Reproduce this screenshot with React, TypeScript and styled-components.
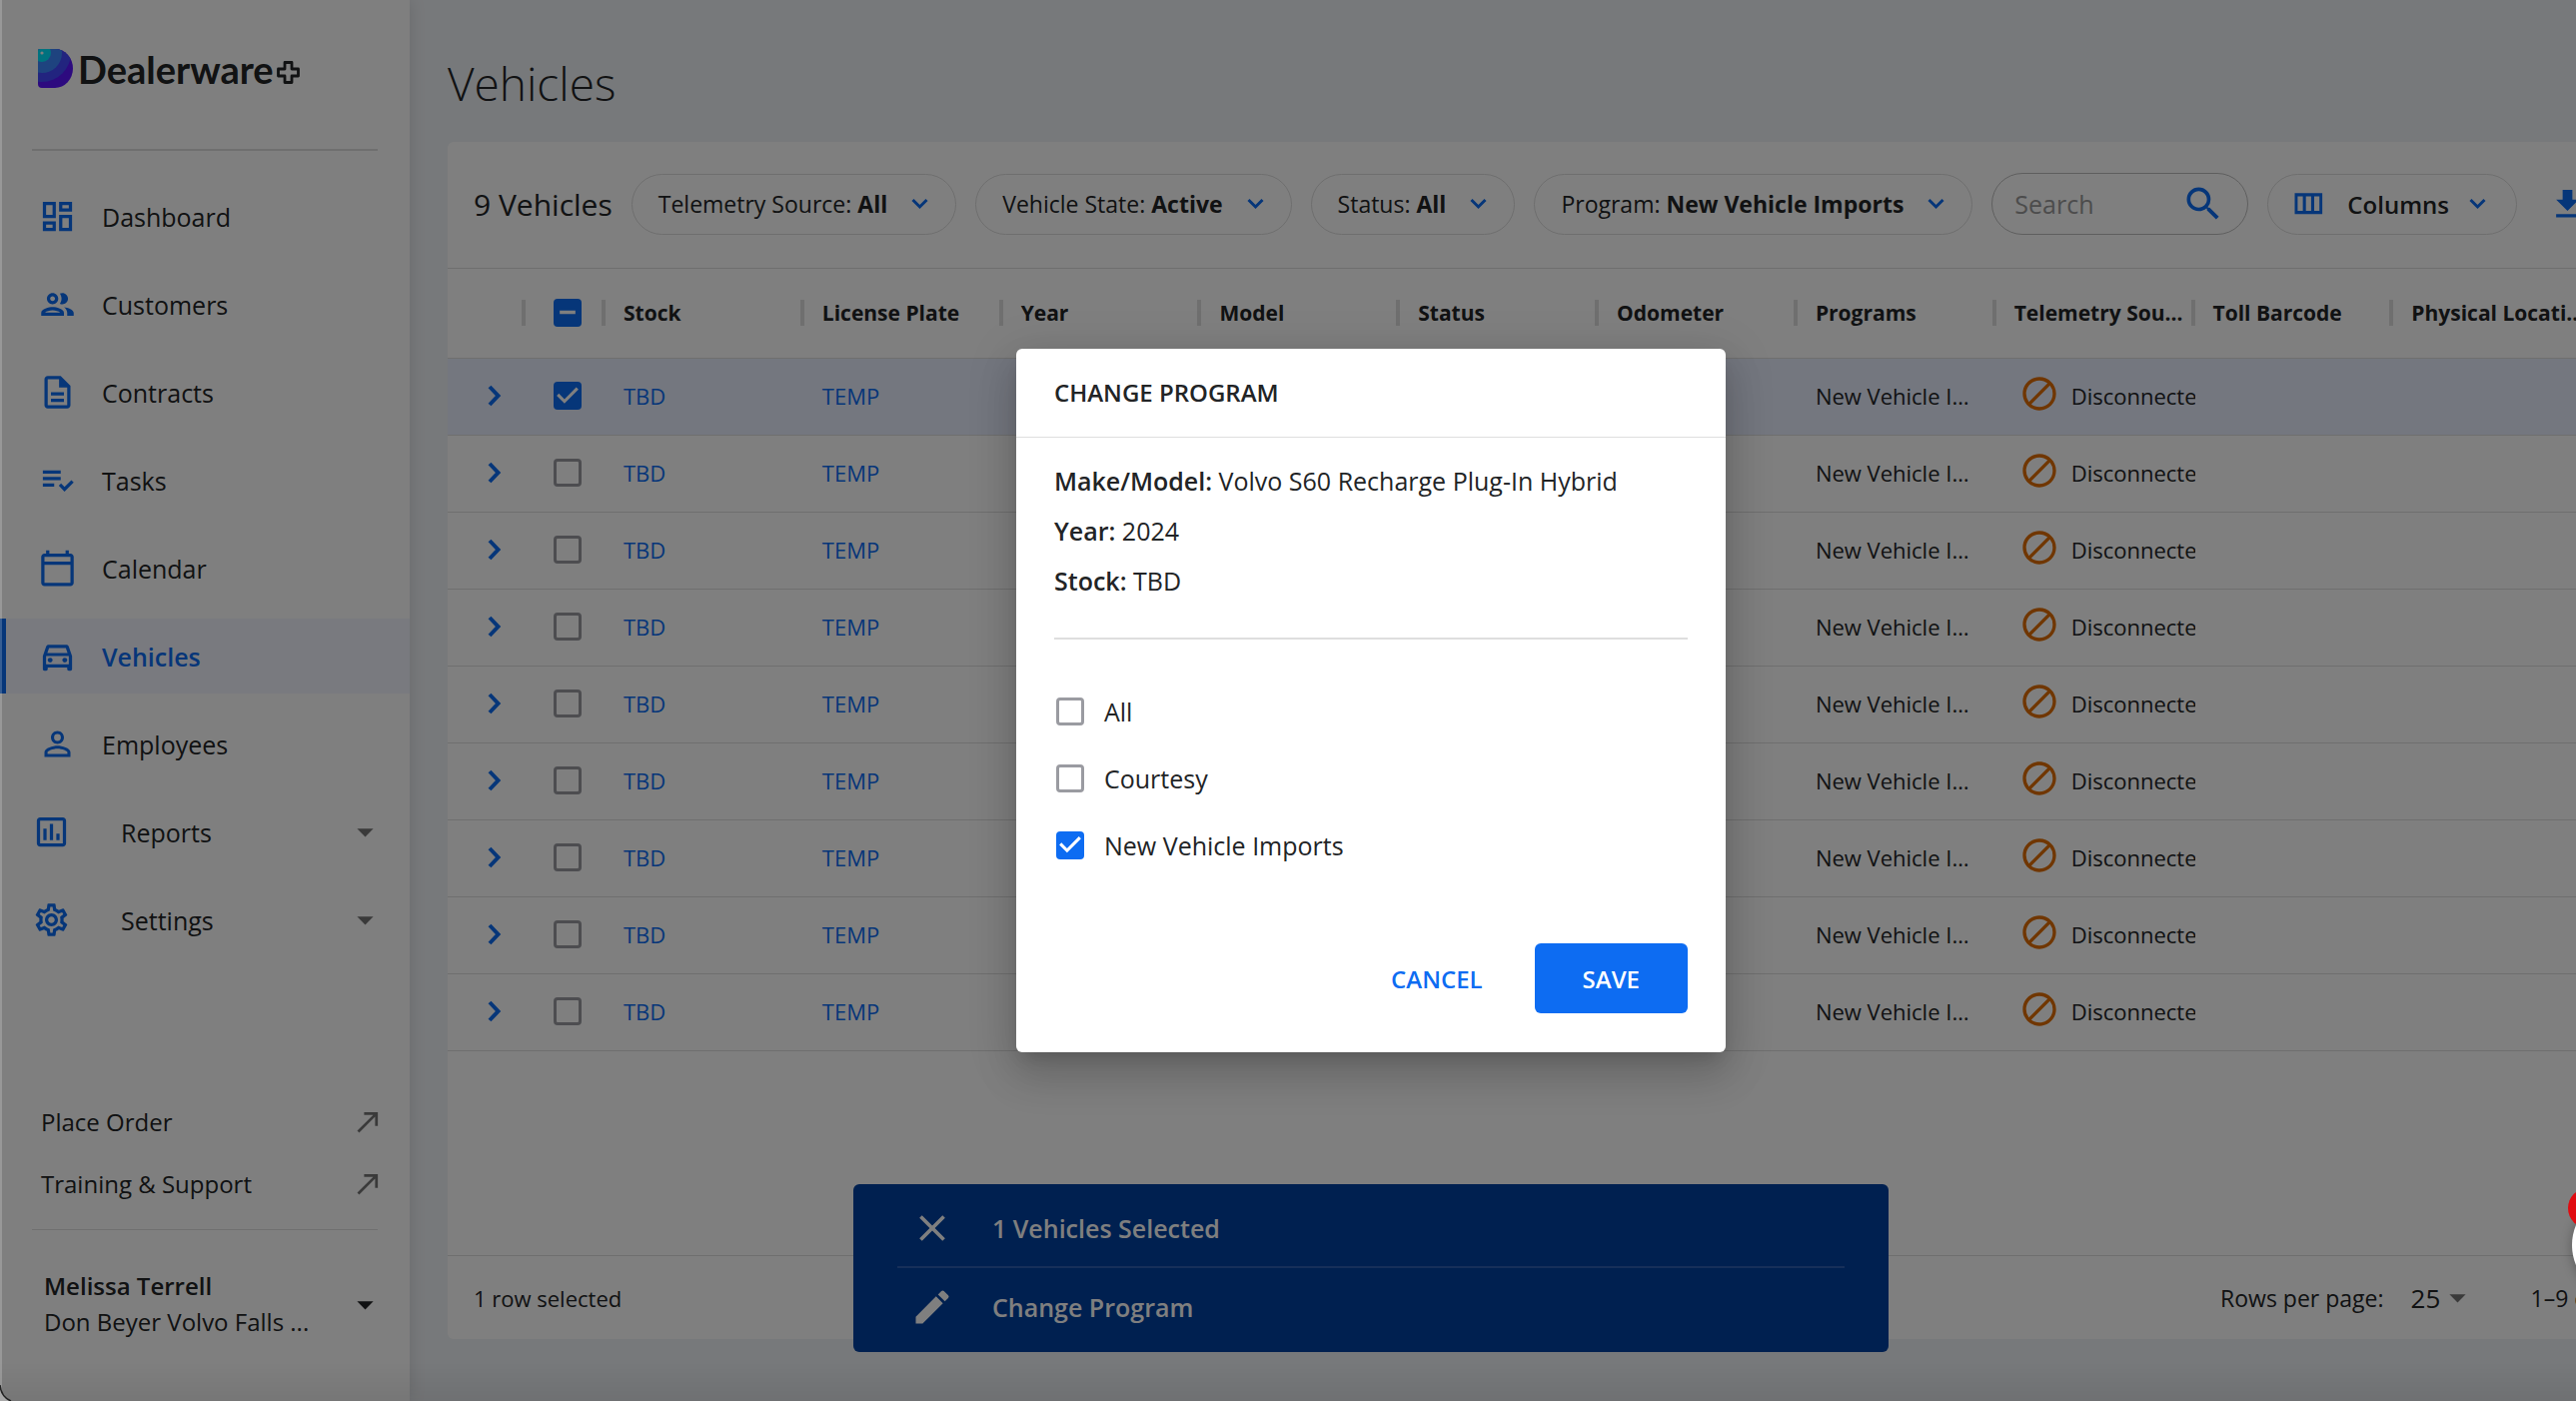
import React from "react";
import styled, { createGlobalStyle, css } from "styled-components";
import {
  MdArrowDropDown,
  MdBlock,
  MdCallMade,
  MdClose,
  MdEdit,
  MdGetApp,
  MdKeyboardArrowLeft,
  MdKeyboardArrowRight,
  MdOutlineAssessment,
  MdOutlineDashboard,
  MdOutlineDescription,
  MdOutlineDirectionsCar,
  MdOutlineSettings,
  MdPersonOutline,
  MdPlaylistAddCheck,
  MdSearch,
} from "react-icons/md";

const color = {
  blue: "#0d6cf2",
  navy: "#0040a0",
  ink: "#222426",
  muted: "#757575",
  line: "#dedede",
  page: "#eff2f6",
  selected: "#e8eeff",
  orange: "#e06c00",
};

const GlobalStyle = createGlobalStyle`
  *, *::before, *::after { box-sizing: border-box; }
  html, body, #root { height: 100%; }
  body {
    margin: 0;
    overflow: hidden;
    background: ${color.page};
    color: ${color.ink};
    font-family: "Open Sans", "Noto Sans", sans-serif;
    font-size: 25px;
  }
  button, input, select { font: inherit; color: inherit; }
  button { cursor: pointer; }
  a { color: inherit; text-decoration: none; }
  svg { flex: none; display: block; }
`;

const Shell = styled.div`
  position: relative;
  display: flex;
  width: calc(100% + 166px);
  height: 100%;
`;

/* ---------- sidebar ---------- */

const Sidebar = styled.aside`
  position: relative;
  display: flex;
  flex-direction: column;
  flex: none;
  width: 410px;
  padding-bottom: 61px;
  background: #fff;
  box-shadow: 0 0 16px rgba(0, 0, 0, 0.12);
`;

const Brand = styled.a`
  display: flex;
  align-items: center;
  height: 149px;
  padding: 0 38px 12px;
  svg:last-child { margin-top: 8px; }
`;

const BrandName = styled.span`
  margin: 0 3px 0 5px;
  font-family: Lato, sans-serif;
  font-size: 38px;
  font-weight: 700;
  line-height: 40px;
`;

const Divider = styled.hr<{ $thick?: boolean }>`
  width: auto;
  height: ${(p) => (p.$thick ? 2 : 1)}px;
  margin: 0 32px;
  border: 0;
  background: ${color.line};
`;

const NavList = styled.ul`
  display: flex;
  flex-direction: column;
  gap: 13px;
  flex: 1;
  margin: 28px 0 0;
  padding: 0;
  list-style: none;
`;

const navRow = css`
  display: flex;
  align-items: center;
  width: 100%;
  height: 75px;
  border: 0;
  border-left: 6px solid transparent;
  background: none;
  text-align: left;
`;

const NavLink = styled.a<{ $active?: boolean }>`
  ${navRow}
  gap: 25px;
  padding: 0 25px 0 32px;
  ${(p) =>
    p.$active &&
    css`
      border-color: ${color.blue};
      background: #f2f5ff;
      color: ${color.blue};
      font-weight: 600;
    `}
  svg { color: ${color.blue}; }
`;

const NavGroup = styled.button`
  ${navRow}
  gap: 50px;
  padding: 0 25px 0 26px;
  svg:first-child { color: ${color.blue}; }
  svg:last-child { margin-left: auto; color: ${color.muted}; }
`;

const HelpLink = styled.a`
  display: flex;
  align-items: center;
  justify-content: space-between;
  height: 62px;
  padding: 0 25px 0 41px;
  font-size: 24px;
  svg { color: ${color.muted}; }
`;

const HelpLinks = styled.div`
  margin-bottom: 15px;
`;

const UserMenu = styled.button`
  display: flex;
  align-items: center;
  justify-content: space-between;
  margin-top: 38px;
  padding: 0 25px 0 44px;
  border: 0;
  background: none;
  font-size: 24px;
  line-height: 36px;
  text-align: left;
`;

const UserName = styled.strong`
  display: block;
  font-weight: 600;
`;

/* ---------- main area ---------- */

const Main = styled.main`
  display: flex;
  flex-direction: column;
  flex: 1;
  min-width: 0;
  padding: 53px 38px 62px;
`;

const PageTitle = styled.h1`
  margin: 0 0 29px;
  font-size: 46px;
  font-weight: 300;
  line-height: 60px;
`;

const Card = styled.section`
  display: flex;
  flex-direction: column;
  flex: 1;
  min-height: 0;
  overflow: hidden;
  border-radius: 6px;
  background: #fff;
`;

const Toolbar = styled.div`
  display: flex;
  align-items: center;
  gap: 19px;
  height: 127px;
  padding: 0 26px 2px;
  border-bottom: 1px solid ${color.line};
  white-space: nowrap;
`;

const Count = styled.h2`
  margin: 0;
  font-size: 30px;
  font-weight: 400;
`;

const Chip = styled.button<{ $wide?: boolean }>`
  display: flex;
  align-items: center;
  gap: ${(p) => (p.$wide ? 20 : 24)}px;
  height: 61px;
  padding: 0 ${(p) => (p.$wide ? 30 : 27)}px 0 ${(p) => (p.$wide ? 20 : 26)}px;
  border: 1px solid #dcdcdc;
  border-radius: 31px;
  background: none;
  font-size: ${(p) => (p.$wide ? 24 : 23)}px;
  font-weight: ${(p) => (p.$wide ? 600 : 400)};
  svg { color: ${color.blue}; }
  b { font-weight: 700; }
`;

const SearchBox = styled.label`
  display: flex;
  align-items: center;
  width: 257px;
  height: 62px;
  padding: 0 22px;
  border: 1px solid #bdbdbd;
  border-radius: 31px;
  svg { color: ${color.blue}; }
`;

const SearchInput = styled.input`
  flex: 1;
  min-width: 0;
  padding: 0;
  border: 0;
  outline: 0;
  background: none;
  &::placeholder { color: #999; opacity: 1; }
`;

const IconButton = styled.button`
  display: flex;
  padding: 0 12px;
  border: 0;
  background: none;
  color: ${color.blue};
`;

const Table = styled.table`
  width: 100%;
  min-width: 2345px;
  border-collapse: separate;
  border-spacing: 0;
  table-layout: fixed;
  font-size: 22px;
`;

const Col = styled.col<{ $width?: number }>`
  width: ${(p) => (p.$width ? `${p.$width}px` : "auto")};
`;

const HeadCell = styled.th`
  height: 90px;
  padding: 0 0 2px;
  border-bottom: 1px solid ${color.line};
  font-size: 21px;
  font-weight: 700;
  text-align: left;
`;

const HeadInner = styled.div`
  display: flex;
  align-items: center;
`;

const HeadText = styled.span`
  flex: 1;
  overflow: hidden;
  padding-left: 18px;
  text-overflow: ellipsis;
  white-space: nowrap;
`;

const HeadTick = styled.span`
  flex: none;
  width: 4px;
  height: 26px;
  background: ${color.line};
`;

const CheckSlot = styled.span`
  display: flex;
  flex: 1;
  padding-left: 28px;
`;

const Row = styled.tr<{ $selected?: boolean }>`
  background: ${(p) => (p.$selected ? color.selected : "none")};
`;

const Cell = styled.td<{ $left?: number; $right?: number }>`
  height: 77px;
  overflow: hidden;
  padding: 0 ${(p) => p.$right ?? 18}px 2px ${(p) => p.$left ?? 18}px;
  border-bottom: 1px solid ${color.line};
  text-overflow: ellipsis;
  white-space: nowrap;
  a { color: ${color.blue}; }
`;

const Expand = styled.button`
  display: flex;
  padding: 0 0 0 40px;
  border: 0;
  background: none;
  color: ${color.blue};
`;

const Telemetry = styled.div`
  display: flex;
  align-items: center;
  gap: 12px;
  overflow: hidden;
  padding-left: 5px;
  svg { margin-bottom: 4px; color: ${color.orange}; }
`;

const Footer = styled.div`
  display: flex;
  align-items: center;
  height: 84px;
  margin-top: auto;
  padding: 0 9px 0 26px;
  border-top: 1px solid ${color.line};
  font-size: 22px;
  white-space: nowrap;
`;

const PageSize = styled.label`
  margin-left: auto;
  font-size: 23px;
`;

const SelectWrap = styled.span`
  display: flex;
  align-items: center;
  margin: 0 54px 0 27px;
  svg { margin-left: -39px; color: ${color.muted}; pointer-events: none; }
`;

const Select = styled.select`
  width: 66px;
  padding: 0;
  border: 0;
  appearance: none;
  background: none;
  font-size: 26px;
`;

const Range = styled.span`
  font-size: 23px;
`;

const PagerButton = styled.button`
  display: flex;
  padding: 0;
  border: 0;
  background: none;
  color: ${color.muted};
`;

/* ---------- check box ---------- */

const filledBox = css`
  border: 0;
  background: ${color.blue};
  &::after {
    content: "";
    display: block;
    height: 100%;
    background: #fff;
  }
`;

const Check = styled.input`
  flex: none;
  width: 28px;
  height: 28px;
  margin: 0;
  border: 3px solid #9a9ba1;
  border-radius: 4px;
  appearance: none;
  background: none;
  &:checked {
    ${filledBox}
    &::after {
      clip-path: polygon(38.9% 77.8%, 11.1% 50%, 18.9% 42.2%, 38.9% 62.1%, 81.1% 19.9%, 88.9% 27.8%);
    }
  }
  &:indeterminate {
    ${filledBox}
    &::after {
      clip-path: polygon(22% 44%, 78% 44%, 78% 56%, 22% 56%);
    }
  }
`;

/* ---------- selection bar ---------- */

const SelectionBar = styled.div`
  position: absolute;
  bottom: 49px;
  left: 50%;
  width: 1036px;
  padding: 5px 44px 7px;
  transform: translateX(-50%);
  border-radius: 6px;
  background: ${color.navy};
  color: #fff;
`;

const BarAction = styled.button`
  display: flex;
  align-items: center;
  gap: 38px;
  width: 100%;
  height: 77px;
  padding: 0 13px;
  border: 0;
  background: none;
  color: #fff;
  font-weight: 600;
`;

const BarDivider = styled.hr`
  height: 2px;
  margin: 0;
  border: 0;
  background: #2c5fb4;
`;

/* ---------- dialog ---------- */

const Backdrop = styled.div`
  position: absolute;
  inset: 0;
  display: flex;
  align-items: center;
  justify-content: center;
  background: rgba(0, 0, 0, 0.5);
`;

const Dialog = styled.form`
  width: 710px;
  border-radius: 6px;
  background: #fff;
  box-shadow: 0 11px 15px -7px rgba(0, 0, 0, 0.15), 0 24px 40px 3px rgba(0, 0, 0, 0.12),
    0 9px 46px 8px rgba(0, 0, 0, 0.1);
`;

const DialogTitle = styled.h2`
  margin: 0;
  padding: 0 38px;
  border-bottom: 1px solid ${color.line};
  font-size: 24px;
  font-weight: 600;
  line-height: 88px;
`;

const DialogBody = styled.div`
  padding: 18px 38px 0;
`;

const Fact = styled.p`
  margin: 0;
  line-height: 50px;
  b { font-weight: 600; }
`;

const DialogRule = styled.hr`
  height: 2px;
  margin: 32px 0 38px;
  border: 0;
  background: ${color.line};
`;

const Option = styled.label`
  display: flex;
  align-items: center;
  gap: 20px;
  height: 67px;
  padding-left: 2px;
`;

const DialogActions = styled.div`
  display: flex;
  justify-content: flex-end;
  gap: 14px;
  padding: 65px 38px 39px;
`;

const DialogButton = styled.button<{ $primary?: boolean }>`
  height: 70px;
  padding: 0 ${(p) => (p.$primary ? 48 : 38)}px;
  border: 0;
  border-radius: 6px;
  background: ${(p) => (p.$primary ? color.blue : "none")};
  color: ${(p) => (p.$primary ? "#fff" : color.blue)};
  font-size: 24px;
  font-weight: 600;
`;

/* ---------- help launcher and window edge ---------- */

const Launcher = styled.button`
  position: absolute;
  right: 66px;
  bottom: 104px;
  width: 104px;
  height: 104px;
  border: 0;
  border-radius: 50%;
  background: #fff;
  box-shadow: 0 2px 12px rgba(0, 0, 0, 0.3);
`;

const LauncherBadge = styled.span`
  position: absolute;
  top: -5px;
  left: -4px;
  width: 40px;
  height: 40px;
  border-radius: 50%;
  background: #e00b10;
`;

const WindowEdge = styled.div`
  position: absolute;
  inset: 0;
  border-left: 2px solid rgba(255, 255, 255, 0.2);
  background: linear-gradient(to top, rgba(0, 0, 0, 0.07), transparent 40px);
  pointer-events: none;
`;

const WindowCorner = styled.svg`
  position: absolute;
  bottom: 0;
  left: 0;
  pointer-events: none;
`;

/* ---------- drawings ---------- */

const BrandMark = () => (
  <svg width="35" height="39" viewBox="0 0 35 39" aria-hidden="true">
    <defs>
      <clipPath id="mark">
        <path d="M2 0H17A18 19.500 0 0 1 17 39H4Q0 39 0 35V2Q0 0 2 0Z" />
      </clipPath>
    </defs>
    <g clipPath="url(#mark)">
      <rect width="35" height="39" fill="#5a14ff" />
      <circle cx="4" cy="4" r="29" fill="#4448ff" />
      <circle cx="4" cy="4" r="20" fill="#3c86ff" />
      <circle cx="4" cy="4" r="9" fill="#00e4ff" />
      <circle cx="4" cy="4" r="1.600" fill="#fff" />
    </g>
  </svg>
);

const BrandPlus = () => (
  <svg width="23" height="23" viewBox="0 0 23 23" fill="none" stroke="currentColor" strokeWidth="2.800" strokeLinejoin="round" aria-hidden="true">
    <path d="M8 1.500h7V8h6.500v7H15v6.500H8V15H1.500V8H8Z" />
  </svg>
);

const PeopleIcon = () => (
  <svg width="39" height="39" viewBox="0 0 24 24" fill="currentColor" aria-hidden="true">
    <path d="M9 13.750c-2.340 0-7 1.170-7 3.500V19h14v-1.750c0-2.330-4.660-3.500-7-3.500zM4.340 17c.84-.58 2.870-1.250 4.660-1.250s3.820.67 4.660 1.250H4.340zM9 12c1.930 0 3.500-1.570 3.500-3.500S10.930 5 9 5 5.500 6.570 5.500 8.500 7.070 12 9 12zm0-5c.83 0 1.500.67 1.500 1.500S9.830 10 9 10s-1.500-.67-1.500-1.500S8.170 7 9 7zm7.040 6.810c1.160.84 1.960 1.960 1.960 3.440V19h4v-1.750c0-2.020-3.500-3.170-5.960-3.440zM15 12c1.930 0 3.500-1.570 3.500-3.500S16.930 5 15 5c-.54 0-1.040.13-1.500.35.63.89 1 1.980 1 3.150s-.37 2.260-1 3.150c.46.22.96.35 1.500.35z" />
  </svg>
);

const CalendarIcon = () => (
  <svg width="39" height="39" viewBox="0 0 24 24" fill="currentColor" aria-hidden="true">
    <path d="M20 3h-1V1h-2v2H7V1H5v2H4c-1.100 0-2 .9-2 2v16c0 1.100.9 2 2 2h16c1.100 0 2-.9 2-2V5c0-1.100-.9-2-2-2zm0 18H4V10h16v11zm0-13H4V5h16v3z" />
  </svg>
);

const ColumnsIcon = () => (
  <svg width="39" height="39" viewBox="0 0 24 24" fill="currentColor" fillRule="evenodd" aria-hidden="true">
    <path d="M4 5v13h17V5zM5.800 7h3.200v9H5.800zM10.900 7h3.200v9h-3.200zM16 7h3.200v9H16z" />
  </svg>
);

const ChevronDown = () => (
  <svg width="17" height="12" viewBox="0 0 17 12" fill="none" stroke="currentColor" strokeWidth="3" aria-hidden="true">
    <path d="M1.500 2l7 7 7-7" />
  </svg>
);

const ChevronRight = () => (
  <svg width="14" height="22" viewBox="0 0 14 22" fill="none" stroke="currentColor" strokeWidth="4" aria-hidden="true">
    <path d="M2 2l8.500 9L2 20" />
  </svg>
);

/* ---------- data ---------- */

const navLinks = [
  { label: "Dashboard", icon: <MdOutlineDashboard size={39} /> },
  { label: "Customers", icon: <PeopleIcon /> },
  { label: "Contracts", icon: <MdOutlineDescription size={39} /> },
  { label: "Tasks", icon: <MdPlaylistAddCheck size={39} /> },
  { label: "Calendar", icon: <CalendarIcon /> },
  { label: "Vehicles", icon: <MdOutlineDirectionsCar size={39} />, active: true },
  { label: "Employees", icon: <MdPersonOutline size={39} /> },
];

const navGroups = [
  { label: "Reports", icon: <MdOutlineAssessment size={39} /> },
  { label: "Settings", icon: <MdOutlineSettings size={39} /> },
];

const filters = [
  { label: "Telemetry Source", value: "All" },
  { label: "Vehicle State", value: "Active" },
  { label: "Status", value: "All" },
  { label: "Program", value: "New Vehicle Imports" },
];

const headings = [
  "Stock",
  "License Plate",
  "Year",
  "Model",
  "Status",
  "Odometer",
  "Programs",
  "Telemetry Source",
  "Toll Barcode",
  "Physical Location",
  "",
];

const vehicles = Array.from({ length: 9 }, (_, id) => ({
  id,
  stock: "TBD",
  plate: "TEMP",
  program: "New Vehicle Imports",
  telemetry: "Disconnected",
  selected: id === 0,
}));

const programs = [
  { label: "All", checked: false },
  { label: "Courtesy", checked: false },
  { label: "New Vehicle Imports", checked: true },
];

const markMixed = (el: HTMLInputElement | null) => {
  if (el) el.indeterminate = true;
};

export default function App() {
  return (
    <>
      <GlobalStyle />
      <Shell>
        <Sidebar>
          <Brand href="#">
            <BrandMark />
            <BrandName>Dealerware</BrandName>
            <BrandPlus />
          </Brand>
          <Divider $thick />
          <NavList>
            {navLinks.map((item) => (
              <li key={item.label}>
                <NavLink href="#" $active={item.active}>
                  {item.icon}
                  {item.label}
                </NavLink>
              </li>
            ))}
            {navGroups.map((item) => (
              <li key={item.label}>
                <NavGroup type="button" aria-expanded="false">
                  {item.icon}
                  {item.label}
                  <MdArrowDropDown size={39} />
                </NavGroup>
              </li>
            ))}
          </NavList>
          <HelpLinks>
            <HelpLink href="#">
              Place Order
              <MdCallMade size={33} />
            </HelpLink>
            <HelpLink href="#">
              Training &amp; Support
              <MdCallMade size={33} />
            </HelpLink>
          </HelpLinks>
          <Divider />
          <UserMenu type="button">
            <span>
              <UserName>Melissa Terrell</UserName>
              Don Beyer Volvo Falls ...
            </span>
            <MdArrowDropDown size={39} />
          </UserMenu>
        </Sidebar>

        <Main>
          <PageTitle>Vehicles</PageTitle>
          <Card>
            <Toolbar>
              <Count>9 Vehicles</Count>
              {filters.map((f) => (
                <Chip key={f.label} type="button" aria-haspopup="listbox">
                  <span>
                    {f.label}: <b>{f.value}</b>
                  </span>
                  <ChevronDown />
                </Chip>
              ))}
              <SearchBox>
                <SearchInput type="text" placeholder="Search" aria-label="Search" />
                <MdSearch size={44} />
              </SearchBox>
              <Chip type="button" $wide aria-haspopup="listbox">
                <ColumnsIcon />
                Columns
                <ChevronDown />
              </Chip>
              <IconButton type="button" aria-label="Download">
                <MdGetApp size={39} />
              </IconButton>
            </Toolbar>

            <Table>
              <colgroup>
                <Col $width={78} />
                <Col $width={80} />
                {headings.map((h) => (
                  <Col key={h} />
                ))}
              </colgroup>
              <thead>
                <tr>
                  <HeadCell>
                    <HeadInner>
                      <HeadText />
                      <HeadTick />
                    </HeadInner>
                  </HeadCell>
                  <HeadCell>
                    <HeadInner>
                      <CheckSlot>
                        <Check type="checkbox" ref={markMixed} aria-label="Select all" />
                      </CheckSlot>
                      <HeadTick />
                    </HeadInner>
                  </HeadCell>
                  {headings.map((h) => (
                    <HeadCell key={h}>
                      <HeadInner>
                        <HeadText>{h}</HeadText>
                        <HeadTick />
                      </HeadInner>
                    </HeadCell>
                  ))}
                </tr>
              </thead>
              <tbody>
                {vehicles.map((v) => (
                  <Row key={v.id} $selected={v.selected}>
                    <Cell $left={0} $right={0}>
                      <Expand type="button" aria-label="Expand row">
                        <ChevronRight />
                      </Expand>
                    </Cell>
                    <Cell $left={0} $right={0}>
                      <CheckSlot>
                        <Check type="checkbox" defaultChecked={v.selected} aria-label="Select row" />
                      </CheckSlot>
                    </Cell>
                    <Cell>
                      <a href="#">{v.stock}</a>
                    </Cell>
                    <Cell>
                      <a href="#">{v.plate}</a>
                    </Cell>
                    <Cell />
                    <Cell />
                    <Cell />
                    <Cell />
                    <Cell>{v.program}</Cell>
                    <Cell $right={0}>
                      <Telemetry>
                        <MdBlock size={40} />
                        {v.telemetry}
                      </Telemetry>
                    </Cell>
                    <Cell />
                    <Cell />
                    <Cell />
                  </Row>
                ))}
              </tbody>
            </Table>

            <Footer>
              1 row selected
              <PageSize htmlFor="page-size">Rows per page:</PageSize>
              <SelectWrap>
                <Select id="page-size" defaultValue="25">
                  <option>25</option>
                  <option>50</option>
                </Select>
                <MdArrowDropDown size={39} />
              </SelectWrap>
              <Range>1–9 of 9</Range>
              <PagerButton type="button" aria-label="Previous page">
                <MdKeyboardArrowLeft size={40} />
              </PagerButton>
              <PagerButton type="button" aria-label="Next page">
                <MdKeyboardArrowRight size={40} />
              </PagerButton>
            </Footer>
          </Card>
        </Main>

        <SelectionBar>
          <BarAction type="button">
            <MdClose size={44} />
            1 Vehicles Selected
          </BarAction>
          <BarDivider />
          <BarAction type="button">
            <MdEdit size={44} />
            Change Program
          </BarAction>
        </SelectionBar>

        <Backdrop>
          <Dialog role="dialog" aria-label="Change program">
            <DialogTitle>CHANGE PROGRAM</DialogTitle>
            <DialogBody>
              <Fact>
                <b>Make/Model:</b> Volvo S60 Recharge Plug-In Hybrid
              </Fact>
              <Fact>
                <b>Year:</b> 2024
              </Fact>
              <Fact>
                <b>Stock:</b> TBD
              </Fact>
              <DialogRule />
              {programs.map((p) => (
                <Option key={p.label}>
                  <Check type="checkbox" defaultChecked={p.checked} />
                  {p.label}
                </Option>
              ))}
            </DialogBody>
            <DialogActions>
              <DialogButton type="button">CANCEL</DialogButton>
              <DialogButton type="button" $primary>
                SAVE
              </DialogButton>
            </DialogActions>
          </Dialog>
        </Backdrop>

        <Launcher type="button" aria-label="Help">
          <LauncherBadge />
        </Launcher>
        <WindowEdge />
        <WindowCorner width="12" height="16" viewBox="0 0 12 16" aria-hidden="true">
          <path d="M0 0Q1 12 11 16H0Z" fill="#a8a8a8" />
          <path d="M0 0Q1 12 11 16" fill="none" stroke="#222" strokeWidth="1.500" />
        </WindowCorner>
      </Shell>
    </>
  );
}
